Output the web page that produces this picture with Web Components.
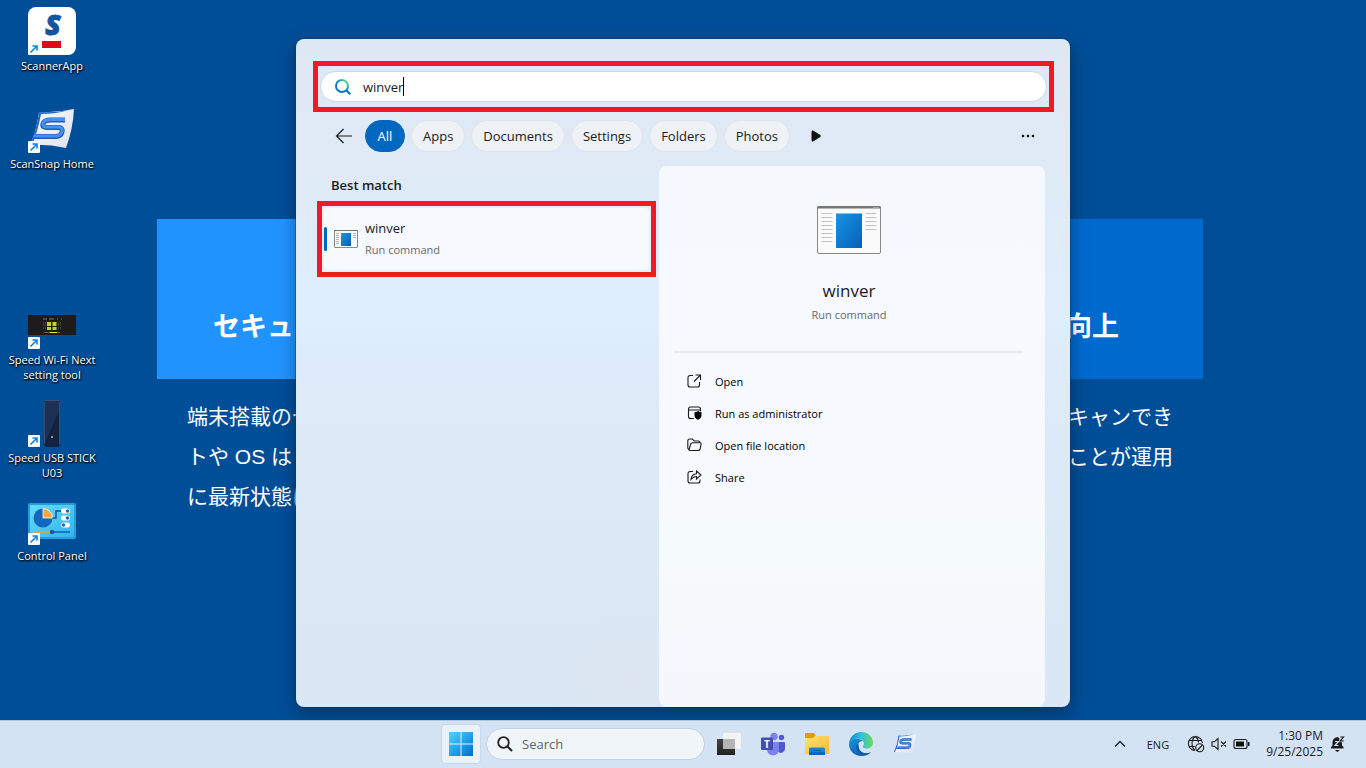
<!DOCTYPE html>
<html lang="en">
<head>
<meta charset="utf-8">
<meta name="viewport" content="width=device-width, initial-scale=1">
<title>Desktop search</title>
<style>
  html, body { margin: 0; }
  body {
    font-family: "Open Sans", "Noto Sans", "Noto Sans CJK JP", sans-serif;
    font-size: 13px;
    color: #1b1b1b;
    background: #004e98;
  }
</style>
</head>
<body>
<desktop-shell></desktop-shell>

<script>
const register = (name, html) => {
  const template = document.createElement('template');
  template.innerHTML = html;
  customElements.define(name, class extends HTMLElement {
    constructor() {
      super();
      this.attachShadow({ mode: 'open' }).append(template.content.cloneNode(true));
    }
  });
};

/* ---------- pictures ---------- */

const scanSnapLogo = `
  <svg viewBox="0 0 48 48" aria-hidden="true">
    <defs><linearGradient id="sheet" x1="0" y1="0" x2="1" y2="1">
      <stop offset="0" stop-color="#f8f9fc"/><stop offset="1" stop-color="#dfe3ee"/></linearGradient></defs>
    <path d="M11 7Q28 8 46 4Q45 24 38 43Q20 39 2 40Q9 24 11 7z" fill="url(#sheet)"/>
    <path d="M11 7Q27 8 41 5Q28 9 13 9Q10 26 4 40H2Q9 24 11 7z" fill="#2466c4"/>
    <path d="M37 15H23Q16 15 15 19Q14 22.500 19 22.500H31Q35 23 34 27Q33 31.500 28 31.500H6" fill="none" stroke="#1f5cb8" stroke-width="5"/>
    <path d="M37 14.500H23Q16 14.500 15 18.500Q14 22 19 22H31Q35 22.500 34 26.500Q33 31 28 31H6" fill="none" stroke="#4592ee" stroke-width="3"/>
  </svg>`;

const windowPicture = `
  <svg viewBox="0 0 64 48" aria-hidden="true">
    <defs><linearGradient id="page" x1="0" y1="0" x2="1" y2="1">
      <stop offset="0" stop-color="#1994e4"/><stop offset="1" stop-color="#0360b8"/></linearGradient></defs>
    <rect x=".5" y=".5" width="63" height="47" rx="1.5" fill="#fafafa" stroke="#8b8784"/>
    <path d="M0 2.5V2a2 2 0 0 1 2-2h60a2 2 0 0 1 2 2v.5z" fill="#797572"/>
    <path d="M56 1.5h6" stroke="#a5a19e"/>
    <rect x="19" y="7.500" width="26" height="34.500" fill="url(#page)"/>
    <path d="M4.500 7.500h11M4.500 11.500h11M4.500 15.500h11M4.500 19.500h11M4.500 23.500h11M4.500 27.500h11M4.500 31.500h11M4.500 35.500h11M48.500 7.500h11M48.500 11.500h11M48.500 15.500h11M48.500 19.500h11M48.500 23.500h11" stroke="#c4c4c4"/>
  </svg>`;

const windowPictureSmall = `
  <svg viewBox="0 0 24 18" aria-hidden="true">
    <defs><linearGradient id="page" x1="0" y1="0" x2="1" y2="1">
      <stop offset="0" stop-color="#1994e4"/><stop offset="1" stop-color="#0360b8"/></linearGradient></defs>
    <rect x=".5" y=".5" width="23" height="17" rx=".5" fill="#fafafa" stroke="#8b8784"/>
    <path d="M0 .5h24" stroke="#797572"/>
    <rect x="7" y="3" width="10" height="13" fill="url(#page)"/>
    <path d="M2 3.500h3M2 5.500h3M2 7.500h3M2 9.500h3M2 11.500h3M2 13.500h3M19 3.500h3M19 5.500h3M19 7.500h3" stroke="#b4b4b4"/>
  </svg>`;

/* ---------- wallpaper ---------- */

register('wall-card', `
  <style>
    :host { display: block; width: 320px; color: #fff; font-family: "Liberation Sans", "Noto Sans CJK JP", sans-serif; }
    .band { box-sizing: border-box; height: 160px; padding: 92px 56px 0; background: var(--band); }
    h2 { margin: 0; font-size: 27px; line-height: 32px; font-weight: 700; white-space: nowrap; }
    p { margin: 18px 30px 0; font-size: 21px; line-height: 40px; white-space: nowrap; }
    :host([end]) { text-align: right; }
    :host([end]) .band { padding-right: 84px; }
  </style>
  <div class="band"><h2><slot name="title"></slot></h2></div>
  <p><slot></slot></p>`);

register('desktop-wallpaper', `
  <style>
    :host { display: flex; justify-content: space-between; padding: 219px 163px 0 157px; }
    wall-card:first-of-type { --band: #2193ff; }
    wall-card:last-of-type { --band: #006ace; }
  </style>
  <wall-card><span slot="title">セキュ</span>端末搭載のセ<br>トや OS は<br>に最新状態に</wall-card>
  <wall-card end><span slot="title">向上</span>キャンでき<br>ことが運用</wall-card>`);

/* ---------- desktop shortcuts ---------- */

register('desktop-icon', `
  <style>
    :host { display: block; }
    a { display: flex; flex-direction: column; align-items: center; padding-top: 7px; color: #fff; text-decoration: none; }
    .picture { position: relative; width: 48px; height: 48px; }
    .badge { position: absolute; left: 0; bottom: 0; width: 12px; height: 12px; }
    .label { margin-top: 3px; font-size: 11px; line-height: 15px; text-align: center;
      text-shadow: 0 1px 2px #000, 1px 1px 2px #000; }
    ::slotted(svg) { display: block; width: 48px; height: 48px; }
  </style>
  <a href="#">
    <span class="picture"><slot name="picture"></slot>
      <svg class="badge" viewBox="0 0 12 12" aria-hidden="true"><rect width="12" height="12" rx="1" fill="#f7f9fb"/><path d="M2.500 9.500 8.500 3.500M4.500 3h4.500v4.500" fill="none" stroke="#1583dc" stroke-width="1.600"/></svg>
    </span>
    <span class="label"><slot></slot></span>
  </a>`);

register('desktop-icons', `
  <style>
    :host { display: grid; grid-template-columns: 104px; grid-template-rows: repeat(6, 98px); align-content: start; }
    .wifi { grid-row: 4; }
    .stick { grid-row: 5; }
    .panel { grid-row: 6; }
    svg { display: block; width: 48px; height: 48px; overflow: visible; }
  </style>
  <desktop-icon>
    <svg slot="picture" viewBox="0 0 48 48" aria-hidden="true"><rect width="48" height="48" rx="8" fill="#fff"/>
      <text x="25" y="28" text-anchor="middle" font-family="Open Sans" font-weight="800" font-style="italic" font-size="28" fill="#12559c" stroke="#12559c">S</text>
      <rect x="14" y="34" width="19" height="7" fill="#d90c18"/></svg>ScannerApp</desktop-icon>
  <desktop-icon><span slot="picture">${scanSnapLogo}</span>ScanSnap Home</desktop-icon>
  <desktop-icon class="wifi">
    <svg slot="picture" viewBox="0 0 48 48" aria-hidden="true"><rect y="14" width="48" height="20" fill="#211a1b"/>
      <path d="M15 18h4M21 18h5M29 18h1M33 18h1" stroke="#777" stroke-width="1"/>
      <path d="M19 21h4v4h-4zM24.500 21h4v4h-4zM19 26h4v3h-4zM24.500 26h4v3h-4z" fill="#c3d51c"/>
      <path d="M15 22h3M15 24h3M30 22h3M30 24h3M15 27h3M30 27h3" stroke="#5b7a38" stroke-dasharray="1 1"/>
      <path d="M16 31.500h16" stroke="#666"/><path d="M22 31.500h7" stroke="#e4f61a"/></svg>Speed Wi-Fi Next<br>setting tool</desktop-icon>
  <desktop-icon class="stick">
    <svg slot="picture" viewBox="0 0 48 48" aria-hidden="true"><path d="M18 1h12l2 2v43l-2 2H18l-2-2V3z" fill="#14213f"/><path d="M18 1h12l1 1v10L17 44V2z" fill="#1d3157"/><path d="M17 1.500h14M16.500 3v42M31.500 3v42" stroke="#44587e" stroke-width=".8"/><circle cx="24" cy="38" r="1" fill="#a9b8d6"/></svg>Speed USB STICK<br>U03</desktop-icon>
  <desktop-icon class="panel">
    <svg slot="picture" viewBox="0 0 48 48" aria-hidden="true">
      <defs><linearGradient id="cp" x1="0" y1="0" x2="1" y2="1"><stop offset="0" stop-color="#67dbfa"/><stop offset="1" stop-color="#31b5ec"/></linearGradient></defs>
      <rect y="6" width="48" height="36" rx="2" fill="#1f9fdc"/><rect x="2" y="8" width="44" height="32" rx="1" fill="url(#cp)"/>
      <circle cx="15" cy="21" r="9.500" fill="#1166bd"/><path d="M15 21V11.500A9.500 9.500 0 0 1 24.500 21z" fill="#fca63b" stroke="#fff" stroke-width=".8"/>
      <path d="M24.500 21h3.500v-7h6" fill="none" stroke="#114d8d" stroke-width="1.400"/>
      <rect x="33" y="11.500" width="9" height="5" rx="2.500" fill="#fff"/><rect x="33" y="18.500" width="9" height="5" rx="2.500" fill="#fff"/><rect x="33" y="25.500" width="9" height="5" rx="2.500" fill="#fff"/>
      <circle cx="39.500" cy="14" r="1.700" fill="#1166bd"/><circle cx="39.500" cy="21" r="1.700" fill="#1166bd"/><circle cx="35.500" cy="28" r="1.700" fill="#1166bd"/>
      <path d="M6 35h17" stroke="#f29a37" stroke-width="1.600"/><path d="M25 35h17" stroke="#1166bd" stroke-width="1.600"/><circle cx="24" cy="35" r="2.200" fill="#0d5db0"/></svg>Control Panel</desktop-icon>`);

/* ---------- search window ---------- */

register('search-field', `
  <style>
    :host { display: block; border: 5px solid #ed1c24; padding: 5px 2px; }
    label { display: flex; align-items: center; height: 31px; box-sizing: border-box; padding-left: 13px;
      border: 1px solid #cbd9e8; border-radius: 16px; background: #fff; }
    svg { width: 18px; height: 18px; margin-right: 11px; flex: none; }
    input { field-sizing: content; border: 0; outline: 0; padding: 0; margin: 0; background: none; font: inherit; line-height: 20px; color: inherit; }
    .caret { width: 1px; height: 19px; background: #000; }
  </style>
  <label>
    <svg viewBox="0 0 18 18" aria-hidden="true"><defs><linearGradient id="lens" x1="0" y1="1" x2="1" y2="0">
      <stop offset=".3" stop-color="#0f73cf"/><stop offset=".6" stop-color="#1596c8"/><stop offset=".9" stop-color="#6bd67d"/></linearGradient></defs>
      <circle cx="8" cy="8" r="6" fill="none" stroke="url(#lens)" stroke-width="2"/><path d="M12.300 12.300 16.200 16.200" stroke="#0f73cf" stroke-width="2.200"/></svg>
    <input type="text" value="winver" aria-label="Search"><span class="caret"></span>
  </label>`);

register('filter-bar', `
  <style>
    :host { display: flex; align-items: center; gap: 6px; height: 32px; padding: 0 17px 0 22px; }
    button { font: inherit; color: inherit; margin: 0; border: 0; padding: 0; background: none; flex: none; }
    .chip { box-sizing: border-box; min-width: 40px; height: 32px; padding: 0 11px; border-radius: 16px; background: #eef1f5; border: 1px solid #e0e3e7; line-height: 20px; }
    .chip.on { background: #0067c0; border-color: #0067c0; color: #fff; padding: 0; }
    svg { display: block; }
    .back { margin-right: 6px; }
    .more { margin-left: 10px; }
    .dots { margin-left: auto; }
  </style>
  <button class="back" aria-label="Back"><svg width="18" height="16" viewBox="0 0 18 16"><path d="M17 8H1.500M8.500 1 1.500 8l7 7" fill="none" stroke="#1b1b1b" stroke-width="1.200"/></svg></button>
  <button class="chip on">All</button>
  <button class="chip">Apps</button>
  <button class="chip">Documents</button>
  <button class="chip">Settings</button>
  <button class="chip">Folders</button>
  <button class="chip">Photos</button>
  <button class="more" aria-label="More filters"><svg width="20" height="12" viewBox="0 0 20 12"><path d="M6 1.500v9q0 1 1 .5l7-4.300q1-.7 0-1.400L7 1q-1-.5-1 .5z" fill="#111" stroke="#111"/></svg></button>
  <button class="dots" aria-label="Options"><svg width="18" height="4" viewBox="0 0 18 4"><path d="M3 1h2v2H3zM8 1h2v2H8zM13 1h2v2h-2z" fill="#1b1b1b" stroke="#1b1b1b" stroke-width=".4"/></svg></button>`);

register('result-item', `
  <style>
    :host { display: block; border: 5px solid #ed1c24; padding: 2px; background: #e4f0fc; }
    button { display: flex; align-items: center; width: 100%; height: 62px; box-sizing: border-box; border: 0; padding: 0; border-radius: 4px;
      background: #f6f9fe; font: inherit; color: inherit; text-align: left; }
    .bar { width: 3px; height: 24px; border-radius: 2px; background: #0067c0; margin-right: 7px; }
    svg { display: block; width: 24px; height: 18px; margin-right: 7px; }
    .text { display: flex; flex-direction: column; line-height: 21px; }
    small { font-size: 11px; color: #686b70; }
  </style>
  <button><span class="bar"></span>${windowPictureSmall}<span class="text"><slot></slot><small><slot name="kind"></slot></small></span></button>`);

register('action-row', `
  <style>
    :host { display: block; }
    button { display: flex; align-items: center; gap: 13px; width: 100%; height: 32px; border: 0; padding: 0 12px; background: none;
      font: inherit; font-size: 11px; color: #000; text-align: left; }
    ::slotted(svg) { display: block; width: 15px; height: 14px; }
  </style>
  <button><slot name="icon"></slot><slot></slot></button>`);

register('preview-pane', `
  <style>
    :host { display: block; padding: 40px 22px 0 16px; border-radius: 8px; background: linear-gradient(180deg, #f5f8fd, #f6f9fe 50%, #f5fafc 70%, #f5f7fc); }
    header { display: flex; flex-direction: column; align-items: center; }
    header svg { width: 64px; height: 48px; display: block; }
    h2 { margin: 25px 0 0; font-size: 17px; line-height: 24px; font-weight: 400; }
    p { margin: 2px 0 0; font-size: 11px; line-height: 20px; color: #686b70; }
    hr { height: 2px; border: 0; margin: 26px 0 12px; background: #e6eaee; }
    svg[slot] { fill: none; stroke: #1b1b1b; stroke-width: 1.1; }
  </style>
  <header>${windowPicture}<h2>winver</h2><p>Run command</p></header>
  <hr>
  <action-row><svg slot="icon" viewBox="0 0 15 14" aria-hidden="true"><path d="M6 1.500H3a2 2 0 0 0-2 2V11a2 2 0 0 0 2 2h7.500a2 2 0 0 0 2-2V8M8.500 1h5v5M13.500 1 7 7.500"/></svg>Open</action-row>
  <action-row><svg slot="icon" viewBox="0 0 15 14" aria-hidden="true"><path d="M7 12.500H3.500a2 2 0 0 1-2-2V3a2 2 0 0 1 2-2h8a2 2 0 0 1 2 2v2.500M1.500 4h12"/><path d="M11 5q1.500 1.200 3.500 1.200v3q0 3-3.500 4.500-3.500-1.500-3.500-4.500v-3Q9.500 6.200 11 5z" fill="#000" stroke="none"/></svg>Run as administrator</action-row>
  <action-row><svg slot="icon" viewBox="0 0 15 14" aria-hidden="true"><path d="M2 12 .8 10V3q0-2 2-2h2.500l2 2h4q1.700 0 1.700 1.500M2 12l1.700-6q.4-1.300 2-1.300h7q1.600 0 1.400 1.600l-1 4.700q-.4 1.500-2 1.500H3.500Q2 12.500 2 12z"/></svg>Open file location</action-row>
  <action-row><svg slot="icon" viewBox="0 0 15 14" aria-hidden="true"><path d="M6 1.500H3a2 2 0 0 0-2 2V11a2 2 0 0 0 2 2h8a2 2 0 0 0 2-2V9.500M4 9.500Q4.500 4 9.500 3.700V1L14 5 9.500 9V6.500Q6.500 6.300 4 9.500z"/></svg>Share</action-row>`);

register('search-window', `
  <style>
    :host { display: flex; flex-direction: column; box-sizing: border-box; width: 774px; max-width: 100%; padding: 22px 16px 0 17px; border-radius: 8px;
      background:
        radial-gradient(ellipse 90px 70px at 340px 640px, rgb(226 228 242 / .5), rgb(226 228 242 / 0)),
        linear-gradient(180deg, #dde8f4 0, #dfeaf6 20%, #deeefd 40%, #dce9f7 58%, #dae7f4 100%);
      box-shadow: 0 0 0 1px rgb(0 50 100 / .35), 0 6px 18px rgb(0 0 0 / .35); }
    filter-bar { margin-top: 8px; }
    .columns { flex: 1; display: grid; grid-template-columns: 1fr 386px; margin-top: 14px; padding-right: 9px; }
    .best { padding: 9px 3px 0 4px; }
    h3 { margin: 0 0 6px 14px; font-size: 13px; line-height: 20px; font-weight: 600; }
  </style>
  <search-field></search-field>
  <filter-bar></filter-bar>
  <div class="columns">
    <section class="best"><h3>Best match</h3><result-item>winver<span slot="kind">Run command</span></result-item></section>
    <preview-pane></preview-pane>
  </div>`);

/* ---------- taskbar ---------- */

register('task-bar', `
  <style>
    :host { display: grid; grid-template-columns: 1fr auto 1fr; align-items: center; box-sizing: border-box; height: 48px;
      background: #d3e3f3; box-shadow: inset 0 1px #b4c6da; }
    button { font: inherit; color: inherit; border: 0; margin: 0; padding: 0; background: none; display: flex; align-items: center; justify-content: center; }
    svg { display: block; overflow: visible; }
    .apps { grid-column: 2; display: flex; align-items: center; }
    .apps > button { width: 44px; height: 40px; }
    .apps > .start { width: 38px; height: 38px; margin: 0 6px 0 3px; border-radius: 4px; background: #e9f1fa; box-shadow: 0 0 1px 1px #c9d8e8; }
    .search { display: flex; align-items: center; box-sizing: border-box; width: 219px; height: 32px; margin-right: 2px; padding-left: 10px;
      border: 1px solid #c3d2e1; border-radius: 16px; background: #f0f5fa; }
    .search svg { flex: none; margin-right: 9px; }
    .search input { min-width: 0; flex: 1; border: 0; outline: 0; padding: 0; background: none; font: inherit; color: #5d6268; }
    .search input::placeholder { color: #5d6268; opacity: 1; }
    .tray { grid-column: 3; justify-self: end; display: flex; align-items: center; padding-right: 20px; font-size: 11px; }
    .lang { margin: 0 18px 0 21px; }
    .status { gap: 6px; }
    .clock { margin: 0 7px 0 16px; font-size: 12px; line-height: 16px; text-align: right; }
  </style>
  <div class="apps">
    <button class="start" aria-label="Start"><svg width="24" height="24" viewBox="0 0 24 24"><defs><linearGradient id="w" gradientUnits="userSpaceOnUse" x1="1" y1="1" x2="23" y2="23"><stop offset="0" stop-color="#55ccf8"/><stop offset=".55" stop-color="#1f9fea"/><stop offset="1" stop-color="#0570ce"/></linearGradient></defs><path d="M0 0h11.500v11.500H0zM12.500 0H24v11.500H12.500zM0 12.500h11.500V24H0zM12.500 12.500H24V24H12.500z" fill="url(#w)"/></svg></button>
    <label class="search"><svg width="16" height="16" viewBox="0 0 16 16" aria-hidden="true"><circle cx="6.500" cy="6.500" r="5.300" fill="none" stroke="#222" stroke-width="1.800"/><path d="m10.500 10.500 4.500 4.500" stroke="#222" stroke-width="2.200"/></svg><input type="text" placeholder="Search" aria-label="Search Windows"></label>
    <button aria-label="Task view"><svg width="24" height="24" viewBox="0 0 24 24"><defs><linearGradient id="v" x1="0" y1="0" x2="0" y2="1"><stop offset="0" stop-color="#444"/><stop offset="1" stop-color="#222"/></linearGradient></defs><path d="M0 7h18v16H0z" fill="url(#v)"/><path d="M6 1h18v16H6z" fill="#f4f4f4"/><path d="M6 7h12v10H6z" fill="#b5b5b5"/></svg></button>
    <button aria-label="Teams"><svg width="24" height="24" viewBox="0 0 24 24"><circle cx="13" cy="4.500" r="3.700" fill="#7b83eb"/><circle cx="20.500" cy="5.500" r="2.700" fill="#5059c9"/><path d="M17 10h6q1 0 1 1v6a4 4 0 0 1-7 2.500z" fill="#5059c9"/><path d="M6 10h12v7.500a6 6 0 0 1-12 0z" fill="#7b83eb"/><rect y="5.500" width="12" height="12.500" rx="1" fill="#454db5"/><text x="6" y="15.500" text-anchor="middle" font-family="Open Sans" font-size="10" font-weight="700" fill="#fff">T</text></svg></button>
    <button aria-label="File Explorer"><svg width="24" height="24" viewBox="0 0 24 24"><defs><linearGradient id="f" x1="0" y1="0" x2="1" y2="1"><stop offset="0" stop-color="#ffdf73"/><stop offset="1" stop-color="#fdbb2d"/></linearGradient></defs><path d="M0 2q0-1 1-1h8l1.500 2v4H0z" fill="#e09d0b"/><path d="M0 6h8l2-2h13q1 0 1 1v17H0z" fill="url(#f)"/><path d="M4 23v-6q0-1.500 1.500-1.500h13q1.500 0 1.500 1.500v6z" fill="#1585d3"/><path d="M4 20h16v3H4z" fill="#0a69b5"/><path d="M8 18.500h8" stroke="#0a5a9e"/></svg></button>
    <button aria-label="Edge"><svg width="24" height="24" viewBox="0 0 24 24"><defs><linearGradient id="e1" x1="0" y1="0" x2="1" y2="0"><stop offset="0" stop-color="#1489d9"/><stop offset=".5" stop-color="#2fbfdb"/><stop offset="1" stop-color="#6bdb5a"/></linearGradient><linearGradient id="e2" x1="0" y1="0" x2="1" y2="1"><stop offset="0" stop-color="#1795dd"/><stop offset="1" stop-color="#0e4f9f"/></linearGradient></defs>
      <path d="M0 11.500C.8 4.500 6 0 12.200 0 19 0 24 5 24 10.500c0 3.600-2.700 6-6.200 6-2.500 0-4-.8-4-1.700 0-.7 1.200-1.200 1.200-3.200 0-2.600-2.700-4.900-6.300-4.900C4.500 6.700 1 8.700 0 11.500z" fill="url(#e1)"/>
      <path d="M0 12c.2-3.200 3.400-5.300 7.700-5.300 2.800 0 5 1 6 2.300-3.200.2-5 2.600-5 5.300 0 4 3.700 7.200 8 7.200 2 0 3.700-.5 5.300-1.500C19.700 22.600 16.300 24 12.200 24 5.300 24-.2 18.500 0 12z" fill="url(#e2)"/>
      <path d="M9.300 11.300C7.500 13 7 15.500 8 18c1.400 3.700 5.400 6 9.300 5 2-.7 3.600-2 4.700-3-4 2.400-9.500 1.500-11.500-2.500-1-2-.8-4.500-1.200-6.200z" fill="#0d58ad"/></svg></button>
    <button aria-label="ScanSnap Home"><span style="width:24px">${scanSnapLogo}</span></button>
  </div>
  <div class="tray">
    <button aria-label="Show hidden icons"><svg width="12" height="8" viewBox="0 0 12 8"><path d="m1 6.500 5-5 5 5" fill="none" stroke="#222" stroke-width="1.400"/></svg></button>
    <button class="lang">ENG</button>
    <button class="status" aria-label="Network, volume and battery">
      <svg width="18" height="18" viewBox="0 0 18 18" fill="none" stroke="#1b1b1b" stroke-width="1.100"><path d="M8 15.500A7 7 0 1 1 15.400 8M8 15.500C4 12 4 4.500 8.300 1.500 10.500 3 11.500 5.500 11.600 7.500M1.800 5.500h13.200M1.800 11.500h6"/><circle cx="12.700" cy="12.700" r="4"/><path d="m10 15.500 5.500-5.500"/></svg>
      <svg width="16" height="14" viewBox="0 0 16 14" fill="none" stroke="#1b1b1b" stroke-width="1.100"><path d="M1 4.700h2.500L7 1.500v11L3.500 9.300H1zM10 4.500l5 5M15 4.500l-5 5"/></svg>
      <svg width="17" height="12" viewBox="0 0 17 12"><rect x="1" y="1.500" width="13" height="9" rx="2" fill="none" stroke="#1b1b1b" stroke-width="1.100"/><path d="M3 3.500h8v5H3zM15 4h1.500v4H15z" fill="#111"/></svg>
    </button>
    <button class="clock"><span>1:30 PM<br>9/25/2025</span></button>
    <button aria-label="Notifications"><svg width="16" height="18" viewBox="0 0 16 18"><path d="M1 13.500V12l1.500-1.500V7A5 5 0 0 1 8 2.300L12 5v5.500l1.500 1.500v1.500zM5.200 15h4.300a2.200 2.200 0 0 1-4.300 0z" fill="#1b1b1b"/><path d="M5 6.500h3.500L5 10.500h3.500" fill="none" stroke="#d3e3f3" stroke-width="1.200"/><path d="M9.300.8H15v6.400H9.300z" fill="#d3e3f3"/><path d="M10.300 2h3.200l-3.200 4h3.500" fill="none" stroke="#1b1b1b" stroke-width="1.200"/></svg></button>
  </div>`);

register('desktop-shell', `
  <style>
    :host { display: grid; grid-template: 1fr auto / minmax(0, 1fr); min-height: 100vh; }
    desktop-wallpaper, desktop-icons, search-window { grid-area: 1 / 1; }
    desktop-icons { justify-self: start; }
    search-window { justify-self: center; margin: 39px 0 13px; }
  </style>
  <desktop-wallpaper></desktop-wallpaper>
  <desktop-icons></desktop-icons>
  <search-window></search-window>
  <task-bar></task-bar>`);
</script>
</body>
</html>
